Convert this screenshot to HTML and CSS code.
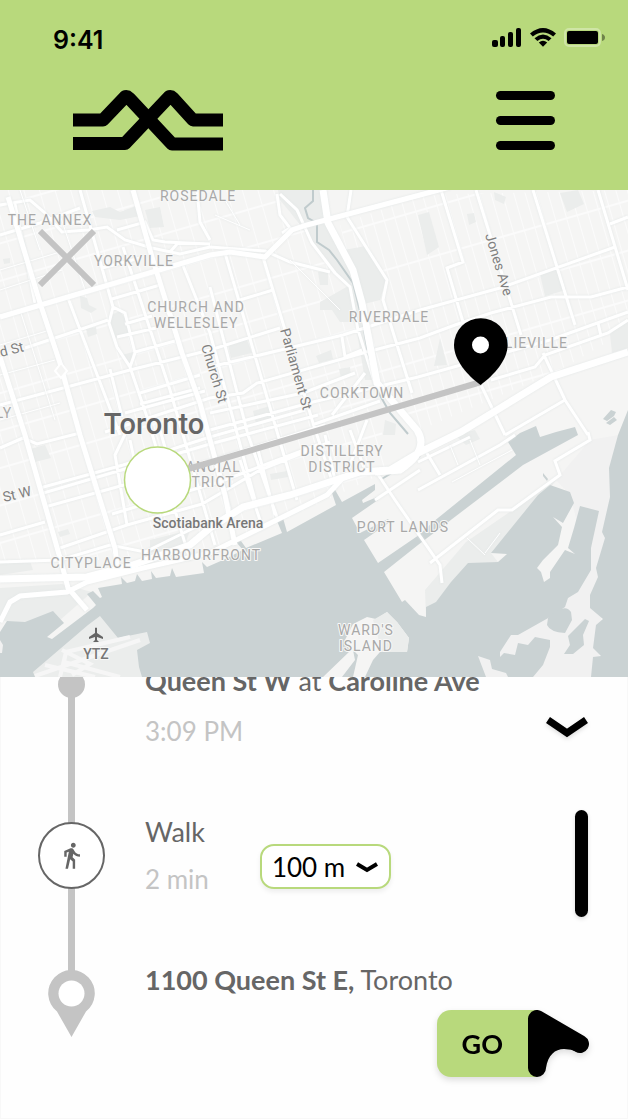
FILE: index.html
```html
<!DOCTYPE html>
<html lang="en">
<head>
<meta charset="utf-8">
<meta name="viewport" content="width=device-width, initial-scale=1">
<title>Trip to 1100 Queen St E</title>
<link rel="stylesheet" href="styles.css">
</head>
<body>
<header class="header">
  <div class="status">
    <time class="clock">9:41</time>
    <div class="status-icons">
      <svg width="30" height="20" viewBox="0 0 30 20" aria-hidden="true"><rect x="0" y="12" width="6" height="7" rx="2"/><rect x="8" y="8" width="5" height="11" rx="2"/><rect x="16" y="4" width="5" height="15" rx="2"/><rect x="24" y="0" width="5" height="19" rx="2"/></svg>
      <svg width="26" height="20" viewBox="0 0 26 20" aria-hidden="true"><path d="M0 5.500Q13-5.500 26 5.500L23.200 8.500Q13 .3 2.800 8.500ZM4.500 10.200Q13 2.800 21.500 10.200L18.600 13Q13 8.400 7.400 13ZM8.800 14.500Q13 11 17.200 14.500L13 18.800Z"/></svg>
      <svg width="42" height="20" viewBox="0 0 42 20" aria-hidden="true"><rect x="1" y="1" width="35" height="17" rx="4" fill="none" stroke="#cfe5a6" stroke-width="2"/><rect x="3" y="3" width="31" height="13" rx="2"/><path d="M38 6q3 1 3 3.500T38 13Z" opacity=".4"/></svg>
    </div>
  </div>
  <div class="bar">
    <a href="#" class="logo" aria-label="Home">
      <svg width="150" height="62" viewBox="0 0 150 62"><g fill="none" stroke="#000" stroke-width="13" stroke-linejoin="round"><path d="M0 31H30L51 9Q53 6 56 9L99 55H150"/><path d="M0 54.500H52L95 9Q97 6 100 9L120 31H150"/></g></svg>
    </a>
    <button class="menu" type="button" aria-label="Menu"><span></span><span></span><span></span></button>
  </div>
</header>

<main>
<section class="map" aria-label="Map of Toronto">
  <svg class="map-art" viewBox="0 190 628 487">
    <defs>
      <pattern id="lanes" width="15" height="36" patternUnits="userSpaceOnUse" patternTransform="rotate(-16)"><path d="M0 0V36M0 18H15" stroke="#fbfbfb" stroke-width="2" fill="none"/></pattern>
      <pattern id="lanes-east" width="11" height="48" patternUnits="userSpaceOnUse" patternTransform="rotate(-16)"><path d="M0 0V48M0 30H11" stroke="#fbfbfb" stroke-width="2" fill="none"/></pattern>
    </defs>
    <rect class="land" y="190" width="628" height="487"/>
    <path fill="url(#lanes)" d="M0 190H300L360 300 375 400 390 470 200 560H0Z"/>
    <path fill="url(#lanes-east)" d="M340 225 420 195 628 190V330L560 370 420 430 380 380Z"/>
    <g class="park">
      <path d="M92 211 110 207 120 212 136 206 140 216 120 220 95 217Z"/><path d="M145 210 160 207 164 227 150 228Z"/>
      <path d="M111 315 120 311 125 318 131 335 114 338 109 323Z"/><path d="M122 355 133 352 130 366Z"/>
      <path d="M80 296 87 298 89 305 97 309 91 313 81 308Z"/><path d="M86 329 96 327 97 334 88 337Z"/>
      <path d="M228 344 247 340 252 353 231 358Z"/><path d="M253 411 270 406 274 420 256 424Z"/>
      <path d="M278 190H323L330 223 356 275 372 380H365L350 290 310 238 290 212 280 200Z"/>
      <path d="M344 250 366 246 386 280 380 300 364 304 354 275Z"/><path d="M320 302 350 285 356 322 340 322 332 310 320 310Z"/>
      <path d="M318 272 328 271 328 285 320 285Z"/><path d="M316 356 331 350 333 359 319 363Z"/><path d="M339 369 350 367 351 377 341 378Z"/>
      <path d="M418 215 429 212 439 247 427 255Z"/><path d="M560 193 578 190 584 204 567 212Z"/><path d="M540 274 558 268 566 290 545 296Z"/>
      <path d="M494 192 506 197 504 204 495 200Z"/><path d="M467 214 474 213 476 222 469 225Z"/><path d="M440 338 447 365 434 366Z"/>
      <path d="M610 334 628 318V348L612 353Z"/><path d="M30 449 45 445 51 458 35 462Z"/><path d="M0 575V562L30 561 33 570Z"/>
      <path d="M0 588 62 584 92 592 60 620 20 624 0 620Z"/><path d="M150 540 190 530 185 545 150 553Z"/>
      <path d="M385 420 396 424 395 435 383 435Z"/><path d="M455 435 475 430 480 439 466 445Z"/>
      <path d="M466 542 556 480 505 552 491 553 498 562 468 565 426 617 425 590Z"/>
      <path d="M58 532 68 529 70 534 60 537Z"/><path d="M3 259 10 258 10 263 4 264Z"/><path d="M270 474 287 471 288 477 271 480Z"/>
    </g>
    <path class="spit" d="M556 480 590 440 618 435 605 540 598 677H500V640L590 570 570 495Z"/>
    <path class="water" d="M0 632 7 621 25 622 53 611 64 623 47 637 52 639 93 608 96 605 87 594 93 591 100 598 102 597 98 588 122 584 121 577 127 583 135 581 137 574 142 581 152 579 151 571 156 578 170 576 172 568 176 577 204 573 202 562 207 567 223 560 243 550 236 542 241 541 246 548 282 533 277 521 283 518 287 532 336 505 331 490 334 488 342 502 375 484 375 490 362 500 363 503 377 497 378 500 352 518 360 533 388 519 390 522 364 540 378 563 419 535 433 522 516 455 508 442 520 433 536 426 540 437 556 432 575 427 578 435 523 465 418 545 384 572 402 602 405 600 419 615 426 617 426 607 436 602 451 582 468 563 498 562 507 554 491 553 538 495 550 485 570 492 574 503 563 523 553 517 562 527 558 545 543 560 537 568 541 572 544 582 550 578V572L565 550 575 554 568 548 574 528 580 506 599 511 591 548V570L578 592 568 598 565 607 550 617 518 635H511L500 652 500 657 504 653 515 655 518 643 528 645 535 637 550 640V647L543 665 533 677H591L593 657 601 656 593 648 596 625 603 619 590 608V595L598 577 596 568 605 538 602 532 610 497 609 468 618 435 628 410V677H0Z"/>
    <path class="water" d="M548 618Q565 602 571 612L572 620 565 633Q550 632 547 625ZM564 654 570 645 568 636 585 619 589 621 583 635 584 645 573 654ZM543 473 548 479 547 481 543 476ZM603 419 611 410 616 412 614 416 607 421ZM606 423 614 417 617 420 610 425Z"/>
    <path class="spit" d="M478 656 490 660 492 669 506 673 508 677H486ZM0 640 3 645 2 653H0Z"/>
    <path class="park" d="M33 672 88 625 100 616 118 638 147 632 150 643 137 650 139 667 142 677H35Z"/>
    <path class="runway" d="M60 677 66 652 130 637M35 676 140 640M45 665 95 677M62 650 90 664 72 675M66 652 64 662 120 677"/>
    <path class="land" d="M323 677 350 651 345 640 353 624 367 617 376 619 387 612 397 622 409 638 407 652 380 652 373 660 365 677H353L358 655 353 650 355 660 342 677Z"/>
    <path class="park" d="M387 612 397 622 409 638 407 652 381 652 378 637 373 620Z"/>
    <path class="river" d="M313 190V201L305 208 308 218 317 223V242L329 250 337 260 353 283 358 303 363 323 369 360 377 390 390 413 408 434M420 456 380 480"/>

    <g class="streets">
      <path d="M15 204 35 303M0 235 40 223 80 208M0 205 30 200 44 212 62 232 88 230 107 227 125 240 152 248 180 254 210 247 265 251 290 262 330 272M80 190 113 307 109 323 117 347 130 367 147 417 190 560M113 307 125 313 135 353 130 367M123 247 170 390 215 545M68 298 120 435M110 369 122 417M117 230 145 222 153 240 165 242 210 244M182 263 210 333 255 500M177 244 170 252M210 287 248 435 278 520M225 253 278 435 297 500M263 257 313 423 335 490M102 268 140 258M112 299 160 285M125 324 152 316M117 337 156 328M135 352 175 341M25 348 70 333 108 320M0 405 130 370 210 350 280 328M240 300 273 290M210 367 343 335 420 310 500 288 615 247M105 432 210 398 243 393 257 383 363 353 420 338 455 325 491 313 551 297 591 297 628 287M140 393 200 375M140 404 200 388M125 413 205 391M210 413 303 393 355 373M210 430 313 402 418 377 550 340 628 312M0 448 23 438 37 444 80 433M40 488 123 465 210 437 305 410M40 494 210 444 318 415M45 507 210 461 325 425M112 514 222 481 320 444M60 548 127 525 202 504 260 470 330 442M0 535 45 522M0 562 60 560 110 545 145 552 210 520M277 194 280 215 290 228 282 233M280 194 297 210 312 243 335 273M351 190 347 217 387 280 383 300 412 393M441 190 463 262 447 268 463 322M476 190 521 335M533 190 575 325M598 190 628 290M610 224 628 217M598 323 601 336M491 380 535 367 545 355 608 333 628 320M543 353 565 400 588 435M481 385 505 435M505 435 565 400M335 273 350 287 358 330 377 390M342 337 345 357 362 350M332 415 365 373M312 425 380 401M160 430 180 500M130 440 145 510M145 510 180 500M127 430 115 455 127 525M200 410 222 481 230 510M240 460 260 520M258 450 275 515M325 435 335 480M350 430 365 470M367 420 345 478M197 190 200 222 210 240"/>
      <path d="M418 490 500 445 515 435M418 462 470 437M425 450 440 475M375 470 395 500 440 565 442 583M430 563 498 510 512 510 560 475 555 461 590 440 588 432M375 500 420 470"/>
    </g>
    <g class="streets minor">
      <path d="M467 538 485 555M485 553 500 533M450 445 458 465M452 482 512 450M470 440 480 465M20 190 40 250M60 215 85 290M0 270 60 252M0 290 62 270M20 310 55 420M0 345 50 330M0 375 55 360M0 420 60 403M150 480 165 530M290 260 340 310M215 215 250 230M225 200 240 225"/>
    </g>
    <g class="arterials">
      <path d="M0 317 210 255 230 252 265 257 292 230 307 225 420 195 450 187M8 197 40 303 60 363 80 435 115 548 118 572M133 190 152 257 182 353 200 403 225 495 235 545M0 357 25 435 62 565 68 588 87 610M0 622 10 602 20 596 67 592 87 582 143 568 210 553 327 495 343 478"/>
      <path class="wide" d="M323 190 328 223 353 270 362 303 377 383 417 430Q430 450 400 470L375 472M0 579 87 577 133 565 190 545 210 528 243 507 290 495 360 472 390 470 420 452 461 432 551 377 628 352"/>
    </g>
    <path class="land" d="M61 363 67 371 61 378 55 371Z" stroke="#fff" stroke-width="2"/>

    <g class="area">
      <text x="198" y="201">ROSEDALE</text><text x="50" y="225">THE ANNEX</text><text x="134" y="266">YORKVILLE</text>
      <text x="196" y="312">CHURCH AND</text><text x="196" y="328">WELLESLEY</text><text x="389" y="322">RIVERDALE</text>
      <text x="523" y="348">LESLIEVILLE</text><text x="362" y="398">CORKTOWN</text>
      <text x="342" y="456">DISTILLERY</text><text x="342" y="472">DISTRICT</text>
      <text x="201" y="472">FINANCIAL</text><text x="201" y="487">DISTRICT</text>
      <text x="403" y="532">PORT LANDS</text><text x="201" y="560">HARBOURFRONT</text><text x="91" y="568">CITYPLACE</text>
      <text x="366" y="635">WARD'S</text><text x="366" y="651">ISLAND</text><text x="4" y="418">LY</text>
    </g>
    <g class="street-name">
      <text transform="translate(485 235) rotate(73)">Jones Ave</text>
      <text transform="translate(280 330) rotate(74)">Parliament St</text>
      <text transform="translate(201 346) rotate(73)">Church St</text>
      <text transform="translate(1 357) rotate(-14)">d St</text>
      <text transform="translate(4 502) rotate(-13)">St W</text>
    </g>
    <text class="city" x="154" y="434">Toronto</text>
    <text class="place" x="208" y="528">Scotiabank Arena</text>
    <text class="place" x="96" y="659">YTZ</text>
    <path fill="#666" d="M95 628Q96 627 97 628V633L103 637V639L97 637V640L99 642H93L95 640V637L89 639V637L95 633Z"/>

    <path d="M188 469 481 382" stroke="#c4c4c4" stroke-width="6"/>
    <circle cx="157.500" cy="480" r="33" fill="#fff" stroke="#b8d97c" stroke-width="1.500"/>
    <path d="M480.500 385C467 375 454 360 454 345A26.800 26.800 0 0 1 507.600 345C507.600 360 494 375 480.500 385Z"/>
    <circle cx="480.500" cy="345" r="8.500" fill="#fff"/>
  </svg>
  <button class="close" type="button" aria-label="Close map"><svg width="58" height="58" viewBox="0 0 58 58"><path d="M2 2 56 56M56 2 2 56" stroke="#c4c4c4" stroke-width="6"/></svg></button>
</section>

<section class="panel" aria-label="Directions">
  <ol class="steps">
    <li class="step first">
      <div class="rail"><span class="dot"></span></div>
      <div class="info">
        <p class="place-name"><b>Queen St W</b> at <b>Caroline Ave</b></p>
        <p class="muted">3:09 PM</p>
      </div>
      <button class="expand" type="button" aria-label="Show stops"><svg width="42" height="22" viewBox="0 0 42 22"><path d="M2 3 21 16 40 3" fill="none" stroke="#000" stroke-width="7"/></svg></button>
    </li>
    <li class="step">
      <div class="rail"><span class="mode"><svg width="29" height="29" viewBox="0 0 24 24" fill="#666"><path d="M13.500 5.500c1.100 0 2-.9 2-2s-.9-2-2-2-2 .9-2 2 .9 2 2 2zM9.800 8.900L7 23h2.100l1.800-8 2.100 2v6h2v-7.500l-2.100-2 .6-3C14.800 12 16.800 13 19 13v-2c-1.900 0-3.500-1-4.300-2.400l-1-1.600c-.4-.6-1-1-1.700-1-.3 0-.5.1-.8.1L6 8.300V13h2V9.600l1.800-.7"/></svg></span></div>
      <div class="info">
        <p>Walk</p>
        <p class="muted">2 min</p>
      </div>
      <div class="distance">
        <select aria-label="Walking distance"><option>100 m</option><option>200 m</option></select>
        <svg width="22" height="12" viewBox="0 0 22 12" aria-hidden="true"><path d="M1 2 11 8 21 2" fill="none" stroke="#000" stroke-width="4"/></svg>
      </div>
    </li>
    <li class="step last">
      <div class="rail"><svg class="end-pin" width="47" height="67" viewBox="0 0 47 67"><path fill="#c4c4c4" d="M23.500 67 9 41.500A23.300 23.300 0 1 1 38 41.500Z"/><circle cx="23.500" cy="23.500" r="13" fill="#fff"/></svg></div>
      <div class="info">
        <p><b>1100 Queen St E,</b> Toronto</p>
      </div>
    </li>
  </ol>
  <div class="thumb"></div>
  <button class="go" type="button"><span>GO</span><svg width="62" height="67" viewBox="0 0 62 67" aria-hidden="true"><path d="M9 9V58M9 9 52 34" stroke="#000" stroke-width="18" stroke-linecap="round"/><path d="M9 9V58L18 58C20 45 27 39 36 39Q43 39 50 42L52 34Z"/></svg></button>
</section>
</main>
</body>
</html>
```
FILE: styles.css
```css
* { box-sizing: border-box; }
body { margin: 0; background: #fff; color: #666; font-family: Lato, sans-serif; font-size: 27px; line-height: 32px; }
button, select { font: inherit; color: #000; border: 0; padding: 0; background: none; cursor: pointer; }
svg { display: block; }
p, ol { margin: 0; padding: 0; }

.header { background: #b8d97c; padding: 24px 22px 39px 53px; }
.status { display: flex; justify-content: space-between; align-items: center; color: #000; }
.clock { font-family: Inter, sans-serif; font-size: 25px; font-weight: 600; }
.status-icons { display: flex; gap: 8px; align-items: center; padding-bottom: 4px; }
.bar { display: flex; justify-content: space-between; align-items: center; margin-top: 33px; padding: 0 51px 0 20px; }
.menu { display: flex; flex-direction: column; gap: 16px; width: 59px; }
.menu span { height: 9px; border-radius: 5px; background: #000; }

.map { position: relative; overflow: hidden; }
.map-art { width: 100%; height: auto; }
.close { position: absolute; left: 38px; top: 39px; }
.land { fill: #f5f5f4; }
.park { fill: #ebedec; }
.spit { fill: #f1f1f1; }
.water { fill: #cad2d3; }
.runway { fill: none; stroke: #f6f6f6; stroke-width: 4; }
.river { fill: none; stroke: #c0cbcd; stroke-width: 2; }
.streets { fill: none; stroke: #fff; stroke-width: 3; filter: drop-shadow(0 0 1px #e2e6e6); }
.minor { stroke-width: 1; }
.arterials { fill: none; stroke: #fff; stroke-width: 5; filter: drop-shadow(0 0 1px #e2e6e6); }
.wide { stroke-width: 7; }
.area, .street-name, .city, .place { font-family: Roboto, sans-serif; paint-order: stroke; stroke: #f8f8f7; stroke-width: 2px; stroke-linejoin: round; text-anchor: middle; }
.area { font-size: 14px; fill: #a8a8a8; letter-spacing: 1px; }
.street-name { font-size: 14px; fill: #808080; text-anchor: start; }
.city { font-size: 29px; font-weight: 500; fill: #666; }
.place { font-size: 14px; font-weight: 500; fill: #777; }

.panel { position: relative; overflow: hidden; background: #fefefe; border: 1px solid #f8f8f8; border-top: 0; padding: 0 39px 81px 37px; }
.steps { list-style: none; margin-top: -12px; }
.step { display: flex; align-items: flex-start; min-height: 148px; }
.first { min-height: 151px; }
.last { min-height: 73px; }
.rail { position: relative; align-self: stretch; flex: none; width: 67px; margin-right: 40px; padding-top: 6px; display: flex; justify-content: center; align-items: flex-start; }
.rail::before { content: ""; position: absolute; top: 0; bottom: 0; left: 30px; width: 7px; background: #c4c4c4; }
.first .rail::before { top: 20px; }
.last .rail::before { bottom: 60px; }
.dot, .mode, .end-pin { position: relative; }
.dot { width: 27px; height: 27px; border-radius: 50%; background: #c4c4c4; }
.mode { width: 67px; height: 67px; border: 2px solid #666; border-radius: 50%; background: #fff; display: grid; place-items: center; }
.info { display: flex; flex-direction: column; gap: 15px; }
.first .info { gap: 18px; }
b { font-weight: 700; }
.muted { color: #c4c4c4; font-size: 26px; }
.expand { margin: 52px 0 0 auto; filter: drop-shadow(0 2px 2px #0002); }
.distance { position: relative; margin: 28px 0 0 51px; }
.distance select { appearance: none; width: 131px; height: 45px; padding: 0 36px 0 10px; border: 2px solid #b8d97c; border-radius: 14px; background: #fff; box-shadow: 0 3px 5px #0001; font-size: 26px; }
.distance svg { position: absolute; right: 13px; top: 18px; pointer-events: none; }
.thumb { position: absolute; right: 39px; top: 133px; width: 13px; height: 107px; border-radius: 7px; background: #000; box-shadow: 0 2px 4px #0002; }
.go { position: absolute; right: 37px; bottom: 41px; height: 67px; padding-left: 25px; display: flex; align-items: center; gap: 25px; font-weight: 700; background: linear-gradient(to right, #b8d97c 100px, transparent 100px); border-radius: 14px 0 0 14px; filter: drop-shadow(0 3px 3px #0002); }
```
